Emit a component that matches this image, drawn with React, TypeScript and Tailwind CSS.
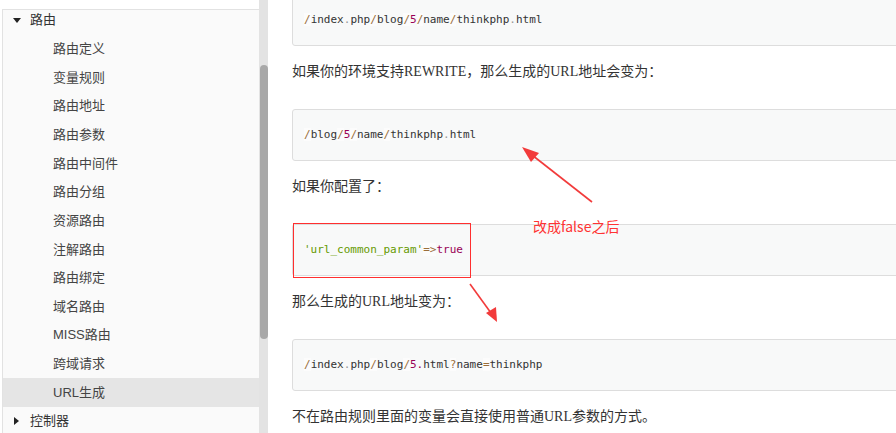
import React from "react";

const subItems = [
  "路由定义",
  "变量规则",
  "路由地址",
  "路由参数",
  "路由中间件",
  "路由分组",
  "资源路由",
  "注解路由",
  "路由绑定",
  "域名路由",
  "MISS路由",
  "跨域请求",
  "URL生成",
];

const sideFont = { fontFamily: '"Liberation Sans", "Noto Sans CJK SC", sans-serif' };
const monoFont = { fontFamily: '"DejaVu Sans Mono", monospace' };
const textFont = { fontFamily: '"Liberation Serif", "Noto Sans CJK SC", serif' };
const cjkFont = { fontFamily: '"Noto Sans CJK SC", sans-serif' };

function Op({ children }: { children: React.ReactNode }) {
  return <span className="text-[#9a6e3a] bg-white/50">{children}</span>;
}
function Num({ children }: { children: React.ReactNode }) {
  return <span className="text-[#990055]">{children}</span>;
}

function CodeBlock({ children, className = "" }: { children: React.ReactNode; className?: string }) {
  return (
    <div
      className={`h-[52px] mr-[-20px] border border-[#dddddd] rounded-[3px] bg-[#f8f9f9] pl-[11px] flex items-center text-[11px] text-[#333] whitespace-pre ${className}`}
      style={monoFont}
    >
      <span className="pt-[1px]">{children}</span>
    </div>
  );
}

function Para({ children }: { children: React.ReactNode }) {
  return (
    <p className="mt-[14px] mb-[25px] h-[24px] leading-[24px] text-[14px] text-[#333] whitespace-nowrap" style={textFont}>
      {children}
    </p>
  );
}

export default function App() {
  return (
    <div className="relative flex w-[896px] h-[433px] overflow-hidden bg-white">
      {/* Sidebar */}
      <div className="w-[259px] shrink-0 pt-[9px] flex flex-col">
        <div className="flex-1 ml-[2px] border-l border-t border-[#e2e2e2] bg-[#fafafa] overflow-hidden" style={sideFont}>
          <div className="mt-[-4.33px]">
            <div className="h-[28.667px] flex items-center text-[13px] text-[#333]">
              <div className="w-[27px] flex justify-center">
                <svg width="8" height="5" viewBox="0 0 8 5">
                  <path d="M0 0 L8 0 L4 5 Z" fill="#222" />
                </svg>
              </div>
              <span>路由</span>
            </div>
            {subItems.map((t) => (
              <div
                key={t}
                className={`h-[28.667px] flex items-center pl-[50px] text-[13px] text-[#444] ${
                  t === "URL生成" ? "bg-[#e5e5e5]" : ""
                }`}
              >
                {t}
              </div>
            ))}
            <div className="h-[28.667px] flex items-center text-[13px] text-[#333]">
              <div className="w-[27px] flex justify-center">
                <svg width="5" height="8" viewBox="0 0 5 8">
                  <path d="M0 0 L5 4 L0 8 Z" fill="#222" />
                </svg>
              </div>
              <span>控制器</span>
            </div>
          </div>
        </div>
      </div>

      {/* Scrollbar */}
      <div className="w-[9px] shrink-0 bg-[#e3e3e3] flex justify-center">
        <div className="mt-[65px] w-[8px] h-[274px] rounded-[4px] bg-[#a8a8a8]" />
      </div>

      {/* Main */}
      <div className="flex-1 pl-[24px] overflow-hidden">
        <div className="mt-[-6px]">
          <CodeBlock>
            <Op>/</Op>index<span className="text-[#999]">.</span>php<Op>/</Op>blog<Op>/</Op>
            <Num>5</Num>
            <Op>/</Op>name<Op>/</Op>thinkphp<span className="text-[#999]">.</span>html
          </CodeBlock>
          <Para>如果你的环境支持REWRITE，那么生成的URL地址会变为：</Para>
          <CodeBlock>
            <Op>/</Op>blog<Op>/</Op>
            <Num>5</Num>
            <Op>/</Op>name<Op>/</Op>thinkphp<span className="text-[#999]">.</span>html
          </CodeBlock>
          <Para>如果你配置了：</Para>
          <CodeBlock>
            <span className="text-[#669900]">'url_common_param'</span>
            <Op>=&gt;</Op>
            <Num>true</Num>
          </CodeBlock>
          <Para>那么生成的URL地址变为：</Para>
          <CodeBlock>
            <Op>/</Op>index<span className="text-[#999]">.</span>php<Op>/</Op>blog<Op>/</Op>
            <Num>5.</Num>html<Op>?</Op>name<Op>=</Op>thinkphp
          </CodeBlock>
          <Para>不在路由规则里面的变量会直接使用普通URL参数的方式。</Para>
        </div>
      </div>

      {/* Annotations */}
      <div className="absolute left-[293px] top-[223px] w-[178px] h-[55px] border border-[#ff2f2f]" />
      <div
        className="absolute left-[533px] top-[215px] text-[14px] leading-[22px] text-[#ff3333] whitespace-nowrap"
        style={cjkFont}
      >
        改成false之后
      </div>
      <svg className="absolute left-0 top-0 pointer-events-none" width="896" height="433" viewBox="0 0 896 433">
        <line x1="592" y1="202" x2="532" y2="155" stroke="#f23b3b" strokeWidth="1.6" />
        <path d="M522 147 L539 153 L531 162 Z" fill="#f23b3b" />
        <line x1="470" y1="284" x2="491" y2="313" stroke="#f23b3b" strokeWidth="1.6" />
        <path d="M497 322 L486 313 L496 307 Z" fill="#f23b3b" />
      </svg>
    </div>
  );
}
